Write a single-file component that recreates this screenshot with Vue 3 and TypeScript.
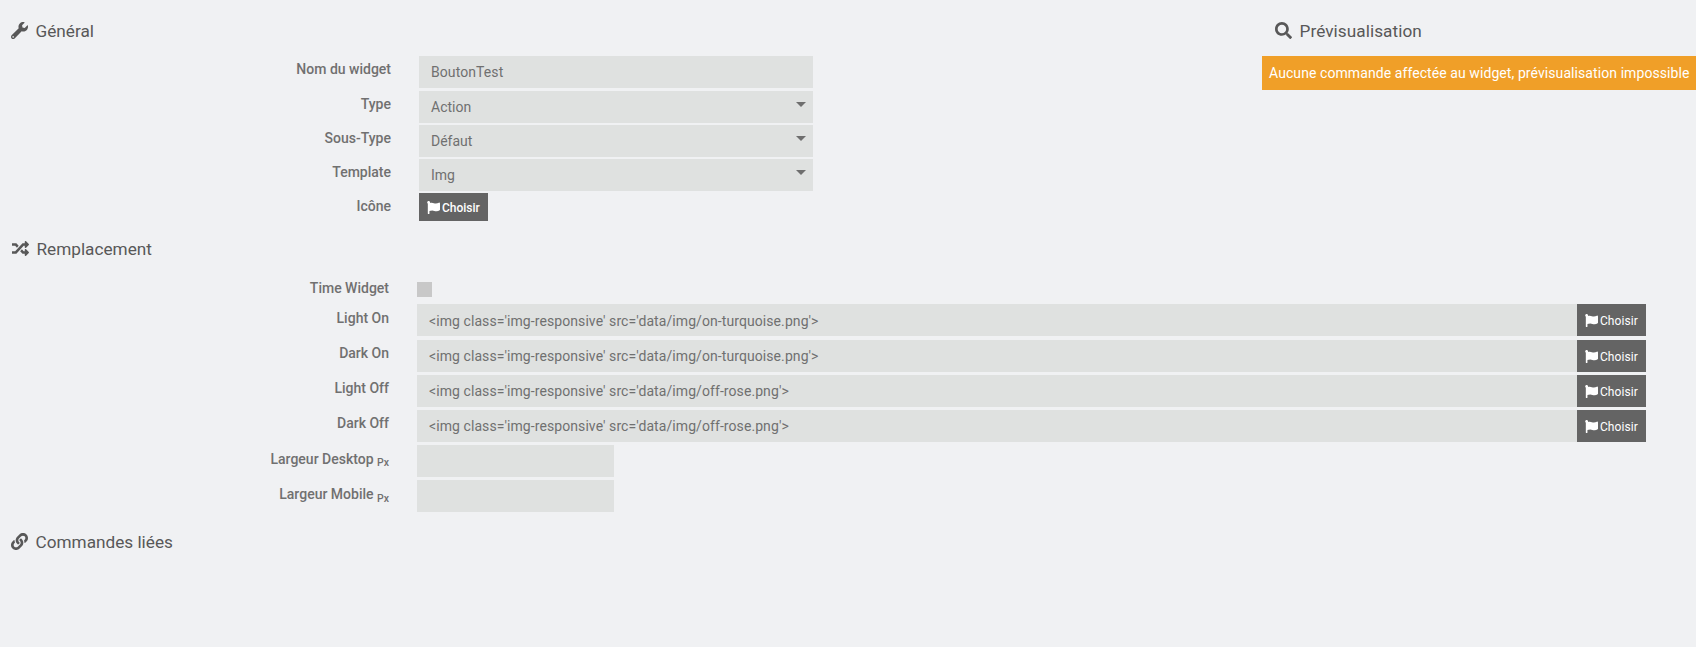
<script setup lang="ts">
import { ref } from 'vue'

const icons = {
  wrench: 'M507.73 109.1c-2.24-9.03-13.54-12.09-20.12-5.51l-74.36 74.36-67.88-11.31-11.31-67.88 74.36-74.36c6.62-6.62 3.43-17.9-5.66-20.16-47.38-11.74-99.55.91-136.58 37.93-39.64 39.64-50.55 97.1-34.05 147.2L18.74 402.76c-24.99 24.99-24.99 65.51 0 90.5 24.99 24.99 65.51 24.99 90.5 0l213.21-213.21c50.12 16.71 107.47 5.68 147.37-34.22 37.07-37.07 49.7-89.32 37.91-136.73zM64 472c-13.25 0-24-10.75-24-24 0-13.26 10.75-24 24-24s24 10.74 24 24c0 13.25-10.75 24-24 24z',
  search: 'M505 442.7L405.3 343c-4.5-4.5-10.6-7-17-7H372c27.6-35.3 44-79.7 44-128C416 93.1 322.9 0 208 0S0 93.1 0 208s93.1 208 208 208c48.3 0 92.7-16.4 128-44v16.3c0 6.4 2.5 12.5 7 17l99.7 99.7c9.4 9.4 24.6 9.4 33.9 0l28.3-28.3c9.4-9.4 9.4-24.6.1-34zM208 336c-70.7 0-128-57.2-128-128 0-70.7 57.2-128 128-128 70.7 0 128 57.2 128 128 0 70.7-57.2 128-128 128z',
  random: 'M504.971 359.029c9.373 9.373 9.373 24.569 0 33.941l-80 79.984c-15.01 15.01-40.971 4.49-40.971-16.971V416h-58.785a12.004 12.004 0 0 1-8.773-3.812l-70.556-75.596 53.333-57.143L352 336h32v-39.981c0-21.438 25.943-31.998 40.971-16.971l80 79.981zM12 176h84l52.781 56.551 53.333-57.143-70.556-75.596A11.999 11.999 0 0 0 122.785 96H12c-6.627 0-12 5.373-12 12v56c0 6.627 5.373 12 12 12zm372 0v39.984c0 21.46 25.961 31.98 40.971 16.971l80-79.984c9.373-9.373 9.373-24.569 0-33.941l-80-79.981C409.943 24.021 384 34.582 384 56.019V96h-58.785a12.004 12.004 0 0 0-8.773 3.812L96 336H12c-6.627 0-12 5.373-12 12v56c0 6.627 5.373 12 12 12h110.785c3.326 0 6.503-1.381 8.773-3.812L352 176h32z',
  link: 'M326.612 185.391c59.747 59.809 58.927 155.698.36 214.59-.11.12-.24.25-.36.37l-67.2 67.2c-59.27 59.27-155.699 59.262-214.96 0-59.27-59.26-59.27-155.7 0-214.96l37.106-37.106c9.84-9.84 26.786-3.3 27.294 10.606.648 17.722 3.826 35.527 9.69 52.721 1.986 5.822.567 12.262-3.783 16.612l-13.087 13.087c-28.026 28.026-28.905 73.66-1.155 101.96 28.024 28.579 74.086 28.749 102.325.51l67.2-67.19c28.191-28.191 28.073-73.757 0-101.83-3.701-3.694-7.429-6.564-10.341-8.569a16.037 16.037 0 0 1-6.947-12.606c-.396-10.567 3.348-21.456 11.698-29.806l21.054-21.055c5.521-5.521 14.182-6.199 20.584-1.731a152.482 152.482 0 0 1 20.522 17.197zM467.547 44.449c-59.261-59.262-155.69-59.27-214.96 0l-67.2 67.2c-.12.12-.25.25-.36.37-58.566 58.892-59.387 154.781.36 214.59a152.454 152.454 0 0 0 20.521 17.196c6.402 4.468 15.064 3.789 20.584-1.731l21.054-21.055c8.35-8.35 12.094-19.239 11.698-29.806a16.037 16.037 0 0 0-6.947-12.606c-2.912-2.005-6.64-4.875-10.341-8.569-28.073-28.073-28.191-73.639 0-101.83l67.2-67.19c28.239-28.239 74.3-28.069 102.325.51 27.75 28.3 26.872 73.934-1.155 101.96l-13.087 13.087c-4.35 4.35-5.769 10.79-3.783 16.612 5.864 17.194 9.042 34.999 9.69 52.721.509 13.906 17.454 20.446 27.294 10.606l37.106-37.106c59.271-59.259 59.271-155.699.001-214.959z',
  flag: 'M349.565 98.783C295.978 98.783 251.721 64 184.348 64c-24.955 0-47.309 4.384-68.045 12.013a55.947 55.947 0 0 0 3.586-23.562C118.117 24.015 94.806 1.206 66.338.048 34.345-1.254 8 24.296 8 56c0 19.026 9.497 35.825 24 45.945V488c0 13.255 10.745 24 24 24h16c13.255 0 24-10.745 24-24v-94.4c28.311-12.064 63.582-22.122 114.435-22.122 53.588 0 97.844 34.783 165.217 34.783 48.169 0 86.667-16.294 122.505-40.858C506.84 359.452 512 349.571 512 339.045v-243.1c0-23.393-24.269-38.87-45.485-29.016-34.338 15.948-76.454 31.854-116.95 31.854z',
}

interface Field {
  label: string
  value: string
}

const name = ref('BoutonTest')

const selects: Field[] = [
  { label: 'Type', value: 'Action' },
  { label: 'Sous-Type', value: 'Défaut' },
  { label: 'Template', value: 'Img' },
]

const replacements = ref<Field[]>([
  { label: 'Light On', value: "<img class='img-responsive' src='data/img/on-turquoise.png'>" },
  { label: 'Dark On', value: "<img class='img-responsive' src='data/img/on-turquoise.png'>" },
  { label: 'Light Off', value: "<img class='img-responsive' src='data/img/off-rose.png'>" },
  { label: 'Dark Off', value: "<img class='img-responsive' src='data/img/off-rose.png'>" },
])

const widths = ref<Field[]>([
  { label: 'Largeur Desktop', value: '' },
  { label: 'Largeur Mobile', value: '' },
])
</script>

<template>
  <main class="page">
    <div class="top">
      <section class="general">
        <h3 class="legend">
          <svg class="icon" viewBox="0 0 512 512"><path :d="icons.wrench" /></svg>
          <span>Général</span>
        </h3>
        <div class="row first">
          <label class="label">Nom du widget</label>
          <input v-model="name" class="control" type="text" />
        </div>
        <div v-for="s in selects" :key="s.label" class="row">
          <label class="label">{{ s.label }}</label>
          <div class="control select">{{ s.value }}</div>
        </div>
        <div class="row">
          <label class="label">Icône</label>
          <button class="btn small" type="button">
            <svg class="flag" viewBox="0 0 512 512"><path :d="icons.flag" /></svg>
            <span>Choisir</span>
          </button>
        </div>
      </section>

      <section class="preview">
        <h3 class="legend">
          <svg class="icon" viewBox="0 0 512 512"><path :d="icons.search" /></svg>
          <span>Prévisualisation</span>
        </h3>
        <div class="alert">Aucune commande affectée au widget, prévisualisation impossible</div>
      </section>
    </div>

    <section class="replace">
      <h3 class="legend shifted">
        <svg class="icon" viewBox="0 0 512 512"><path :d="icons.random" /></svg>
        <span>Remplacement</span>
      </h3>
      <div class="row time">
        <label class="label">Time Widget</label>
        <span class="checkbox" role="checkbox" aria-checked="false"></span>
      </div>
      <div v-for="r in replacements" :key="r.label" class="row image">
        <label class="label">{{ r.label }}</label>
        <div class="group">
          <input v-model="r.value" class="control" type="text" />
          <button class="btn" type="button">
            <svg class="flag" viewBox="0 0 512 512"><path :d="icons.flag" /></svg>
            <span>Choisir</span>
          </button>
        </div>
      </div>
      <div v-for="w in widths" :key="w.label" class="row width">
        <label class="label">{{ w.label }} <sub>Px</sub></label>
        <input v-model="w.value" class="control" type="text" />
      </div>
    </section>

    <section class="linked">
      <h3 class="legend">
        <svg class="icon" viewBox="0 0 512 512"><path :d="icons.link" /></svg>
        <span>Commandes liées</span>
      </h3>
    </section>
  </main>
</template>

<style>
html,
body {
  background: #f0f1f3;
}
</style>

<style scoped>
.page {
  box-sizing: border-box;
  height: 647px;
  overflow: hidden;
  background: #f0f1f3;
  color: #707070;
  font-family: Roboto, 'Liberation Sans', sans-serif;
  font-size: 14px;
  line-height: 20px;
}
.top {
  display: flex;
  justify-content: space-between;
  height: 227px;
}
.general {
  width: 813px;
}
.preview {
  width: 434px;
}
.legend {
  box-sizing: border-box;
  display: flex;
  gap: 7.5px;
  height: 56px;
  margin: 0;
  padding: 18px 0 0 11px;
  color: #585858;
  font-size: 17.2px;
  font-weight: 400;
  line-height: 26px;
}
.preview .legend {
  padding-left: 13px;
  letter-spacing: 0.06px;
}
.icon {
  flex: none;
  width: 17px;
  height: 17px;
  margin-top: 4px;
  fill: currentColor;
}
.row {
  display: grid;
  grid-template-columns: 391px 1fr;
  column-gap: 28px;
  height: 32px;
  margin-bottom: 2px;
}
.row.first {
  margin-bottom: 3px;
}
.label {
  padding-top: 3px;
  font-weight: 500;
  text-align: right;
  white-space: nowrap;
}
.control {
  box-sizing: border-box;
  width: 100%;
  height: 32px;
  margin: 0;
  padding: 0 12px;
  border: 0;
  border-radius: 0;
  outline: 0;
  background: #dfe1e0;
  color: #707070;
  font: inherit;
  letter-spacing: 0.08px;
  line-height: 32px;
}
.select {
  display: flex;
  justify-content: space-between;
  letter-spacing: 0;
}
.select::after {
  width: 0;
  height: 0;
  margin: 11px -5px 0 0;
  border: 5px solid transparent;
  border-top-color: #6e6e6e;
  border-bottom: 0;
  content: '';
}
.btn {
  display: flex;
  flex: none;
  align-items: center;
  gap: 2px;
  width: 69px;
  height: 32px;
  margin: 0;
  padding: 1px 0 0 8px;
  border: 0;
  background: #646464;
  color: #fff;
  font-family: inherit;
  font-size: 12px;
  letter-spacing: 0.06px;
  line-height: 18px;
  white-space: nowrap;
}
.btn.small {
  height: 28px;
  font-weight: 500;
  letter-spacing: 0;
}
.flag {
  width: 13px;
  height: 13px;
  fill: currentColor;
}
.alert {
  box-sizing: border-box;
  height: 34px;
  padding: 0 7px;
  background: #f09f28;
  color: #fff;
  letter-spacing: 0.08px;
  line-height: 34px;
  white-space: nowrap;
}
.replace .row {
  grid-template-columns: 389px 1fr;
  margin-bottom: 3px;
}
.replace .legend {
  height: 51px;
  padding-top: 9px;
}
.legend.shifted {
  padding-left: 12px;
}
.replace .row.time {
  height: 26px;
  margin-bottom: 0;
}
.row.time .label {
  padding-top: 0;
}
.row.time + .row.image {
  margin-bottom: 4px;
}
.row.time + .row.image .label {
  padding-top: 4px;
}
.row.time + .row.image .control {
  padding-top: 1px;
}
.checkbox {
  width: 15px;
  height: 15px;
  margin-top: 4px;
  background: #c8c8c8;
}
.group {
  display: flex;
  width: 1229px;
}
.row.width .label {
  padding-top: 4px;
}
.row.width .control {
  width: 197px;
}
sub {
  position: relative;
  bottom: -0.25em;
  font-size: 10.5px;
  line-height: 0;
  vertical-align: baseline;
}
.row.image + .row.width sub {
  bottom: -2px;
}
.linked .legend {
  padding-top: 14px;
}
</style>
